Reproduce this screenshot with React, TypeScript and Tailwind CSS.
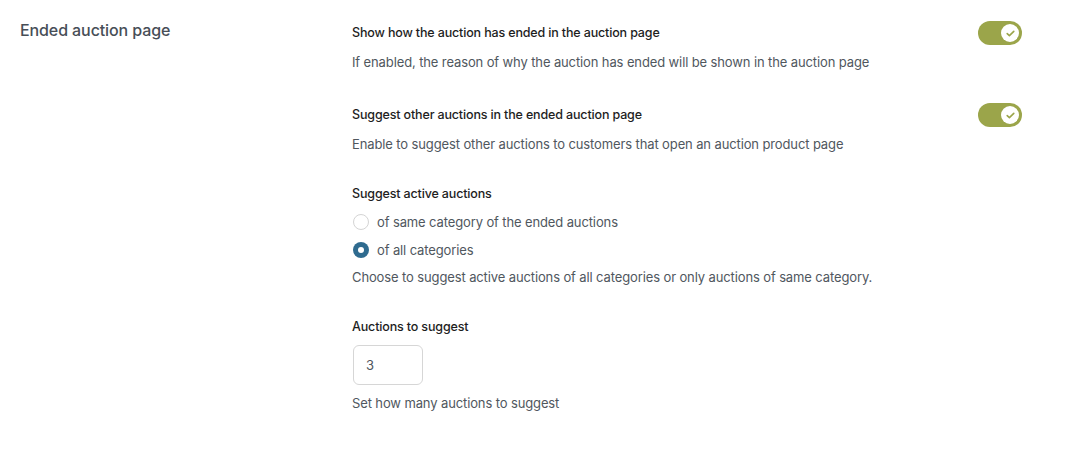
import { useState } from "react";

type ToggleRowProps = {
  label: string;
  description: string;
  checked: boolean;
  onToggle: () => void;
  className?: string;
};

function Toggle({ checked, onToggle }: { checked: boolean; onToggle: () => void }) {
  return (
    <button
      type="button"
      onClick={onToggle}
      className={`relative h-6 w-11 shrink-0 rounded-full transition-colors ${
        checked ? "bg-[#9ba54a]" : "bg-[#c3c4c7]"
      }`}
    >
      <span
        className={`absolute top-[3px] flex h-[18px] w-[18px] items-center justify-center rounded-full bg-white transition-all ${
          checked ? "left-[23px]" : "left-[3px]"
        }`}
      >
        {checked && (
          <svg width="9" height="7" viewBox="0 0 9 7" fill="none">
            <path
              d="M1.2 3.6 3.4 5.6 7.8 1.4"
              stroke="#9ba54a"
              strokeWidth="1.6"
              strokeLinecap="round"
              strokeLinejoin="round"
            />
          </svg>
        )}
      </span>
    </button>
  );
}

function ToggleRow({ label, description, checked, onToggle, className = "" }: ToggleRowProps) {
  return (
    <div className={className}>
      <div className="flex h-6 items-center justify-between">
        <span className="text-[12.5px] font-medium leading-5 tracking-[-0.15px] text-[#1e1e1e]">
          {label}
        </span>
        <Toggle checked={checked} onToggle={onToggle} />
      </div>
      <p className="mt-[7px] text-[13px] leading-5 tracking-[-0.12px] text-[#50575e]">{description}</p>
    </div>
  );
}

function Radio({
  label,
  checked,
  onSelect,
  className = "",
}: {
  label: string;
  checked: boolean;
  onSelect: () => void;
  className?: string;
}) {
  return (
    <label className={`ml-px flex h-5 cursor-pointer items-center gap-2 ${className}`} onClick={onSelect}>
      <span
        className={`flex h-4 w-4 items-center justify-center rounded-full ${
          checked ? "bg-[#2f6b8f]" : "border border-[#d4d4d4] bg-white"
        }`}
      >
        {checked && <span className="h-1.5 w-1.5 rounded-full bg-white" />}
      </span>
      <span className="text-[13px] leading-5 tracking-[-0.12px] text-[#50575e]">{label}</span>
    </label>
  );
}

export default function App() {
  const [showEnded, setShowEnded] = useState(true);
  const [suggestOthers, setSuggestOthers] = useState(true);
  const [scope, setScope] = useState<"same" | "all">("all");
  const [count, setCount] = useState("3");

  return (
    <div
      className="flex h-[460px] w-full bg-white pl-5 pr-[68px]"
      style={{ fontFamily: "Inter, 'Noto Sans', sans-serif" }}
    >
      <div className="w-[332px] shrink-0 pt-[18px]">
        <h2 className="text-[16px] font-medium leading-6 tracking-[-0.1px] text-[#474e57]">
          Ended auction page
        </h2>
      </div>

      <div className="flex-1 pt-[21px]">
        <ToggleRow
          label="Show how the auction has ended in the auction page"
          description="If enabled, the reason of why the auction has ended will be shown in the auction page"
          checked={showEnded}
          onToggle={() => setShowEnded(!showEnded)}
        />

        <ToggleRow
          className="mt-[31px]"
          label="Suggest other auctions in the ended auction page"
          description="Enable to suggest other auctions to customers that open an auction product page"
          checked={suggestOthers}
          onToggle={() => setSuggestOthers(!suggestOthers)}
        />

        {/* Suggest active auctions */}
        <div className="mt-[30px]">
          <p className="text-[12.5px] font-medium leading-5 tracking-[-0.15px] text-[#1e1e1e]">
            Suggest active auctions
          </p>
          <Radio
            className="mt-2"
            label="of same category of the ended auctions"
            checked={scope === "same"}
            onSelect={() => setScope("same")}
          />
          <Radio
            className="mt-2"
            label="of all categories"
            checked={scope === "all"}
            onSelect={() => setScope("all")}
          />
          <p className="mt-[7px] text-[13px] leading-5 tracking-[-0.12px] text-[#50575e]">
            Choose to suggest active auctions of all categories or only auctions of same category.
          </p>
        </div>

        {/* Auctions to suggest */}
        <div className="mt-[30px]">
          <p className="text-[12.5px] font-medium leading-5 tracking-[-0.15px] text-[#1e1e1e]">
            Auctions to suggest
          </p>
          <input
            type="text"
            value={count}
            onChange={(e) => setCount(e.target.value)}
            className="ml-px mt-2 h-10 w-[70px] rounded-md border border-[#d6d6d6] bg-white px-3 text-[13px] text-[#50575e] outline-none"
          />
          <p className="mt-2 text-[13px] leading-5 tracking-[-0.12px] text-[#50575e]">
            Set how many auctions to suggest
          </p>
        </div>
      </div>
    </div>
  );
}
